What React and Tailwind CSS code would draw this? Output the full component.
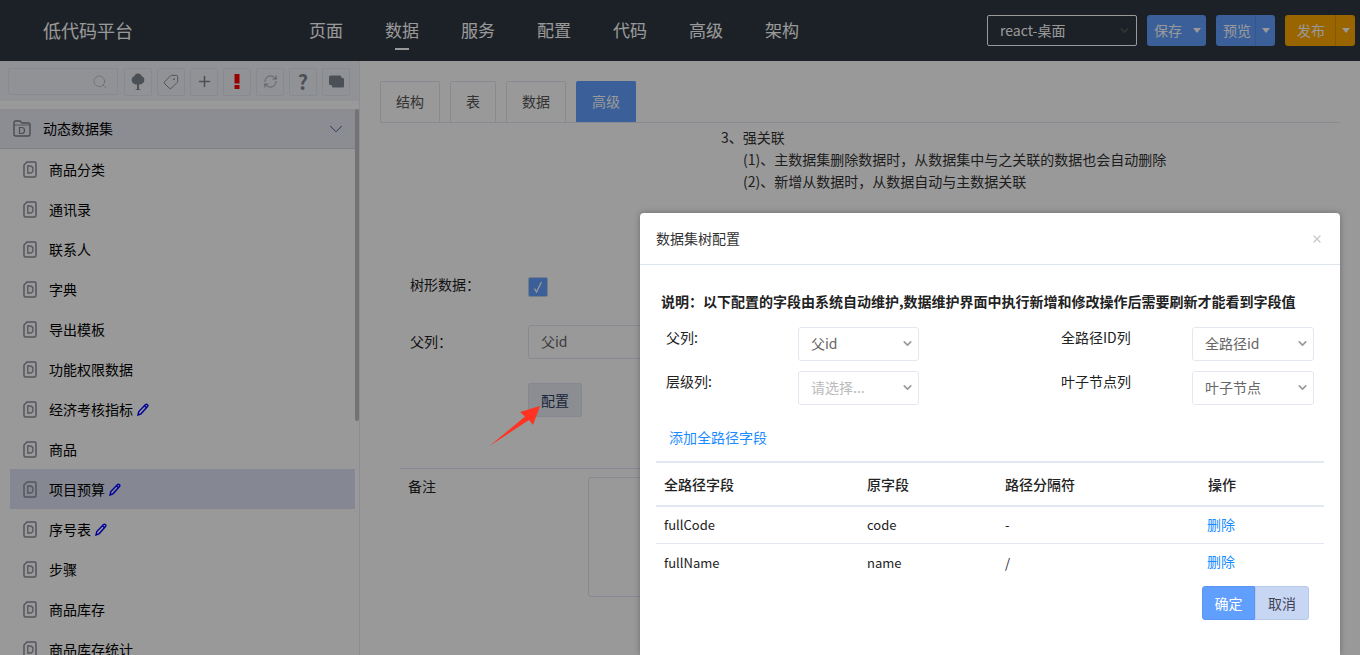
import React from 'react';
import { ChevronDown, Plus, Search, RefreshCw, Tag, X } from 'lucide-react';

const FONT = "font-['Noto_Sans_CJK_SC','Noto_Sans',sans-serif]";

function DocIcon() {
  return (
    <svg width="14" height="17" viewBox="0 0 14 17" fill="none" stroke="#8a8f99" strokeWidth="1.5" className="shrink-0">
      <path d="M4 1 H11.5 Q13 1 13 2.5 V14.5 Q13 16 11.5 16 H2.5 Q1 16 1 14.5 V4 Z" />
      <path d="M4.8 5 V12 H6.8 Q10 12 10 8.5 Q10 5 6.8 5 Z" strokeWidth="1.3" />
    </svg>
  );
}

function FolderIcon() {
  return (
    <svg width="18" height="17" viewBox="0 0 18 17" fill="none" stroke="#7b7f88" strokeWidth="1.4" className="shrink-0">
      <path d="M1 14.5 V2.5 Q1 1 2.5 1 H7 L9 3 H15.5 Q17 3 17 4.5 V14.5 Q17 16 15.5 16 H2.5 Q1 16 1 14.5 Z" />
      <path d="M1 5 H17" strokeWidth="0.8" />
      <path d="M6.5 7.5 V13.5 H8.5 Q11.5 13.5 11.5 10.5 Q11.5 7.5 8.5 7.5 Z" strokeWidth="1.2" />
    </svg>
  );
}

function PencilIcon() {
  return (
    <svg width="12" height="13" viewBox="0 0 12 13" fill="none" stroke="#0000ff" strokeWidth="1.4" className="ml-[4px] shrink-0">
      <path d="M1 12 L1.8 8.5 L8.5 1.5 Q9.5 0.8 10.5 1.7 Q11.3 2.6 10.5 3.5 L4 10.8 Z" />
      <path d="M7.5 2.7 L9.6 4.7" />
    </svg>
  );
}

function ToolBtn({ children }) {
  return (
    <div className="w-[28px] h-[28px] shrink-0 border border-[#e3e7f2] rounded-[2px] flex items-center justify-center">
      {children}
    </div>
  );
}

function TreeIcon() {
  return (
    <svg width="14" height="18" viewBox="0 0 14 18" fill="#7e858f">
      <path d="M7 0.5 C9.5 0.5 10.5 2 10.5 3 C12.5 3.5 13.7 5.5 13.3 7.5 C13 10 11 11.5 8 11.4 L8 16 L10 17 H4 L6 16 L6 11.4 C3 11.5 1 10 0.7 7.5 C0.3 5.5 1.5 3.5 3.5 3 C3.5 2 4.5 0.5 7 0.5 Z" />
    </svg>
  );
}

function CommentsIcon() {
  return (
    <svg width="15" height="13" viewBox="0 0 15 13" fill="#7e858f">
      <path d="M1.5 0.5 H11 Q12.5 0.5 12.5 2 V3 H14 Q15 3 15 4 V11.5 Q15 12.5 14 12.5 H4 Q2.8 12.5 2.8 11 V10 H1.5 Q0 10 0 8.5 V2 Q0 0.5 1.5 0.5 Z" />
    </svg>
  );
}

function BangIcon() {
  return (
    <svg width="6" height="15" viewBox="0 0 6 15" fill="#ff0000">
      <rect x="0.5" y="0" width="5" height="9.5" />
      <rect x="0.5" y="11" width="5" height="4" />
    </svg>
  );
}

const ITEMS = [
  ['商品分类'], ['通讯录'], ['联系人'], ['字典'], ['导出模板'], ['功能权限数据'],
  ['经济考核指标', true], ['商品'], ['项目预算', true, true], ['序号表', true], ['步骤'], ['商品库存'], ['商品库存统计'],
];

function SideItem({ name, edit, active }) {
  return (
    <div className={`h-[40px] shrink-0 flex items-center pl-[13px] ml-[10px] text-[14px] text-black ${active ? 'bg-[#dee3f3]' : ''}`}>
      <DocIcon />
      <span className="ml-[12px]">{name}</span>
      {edit && <PencilIcon />}
    </div>
  );
}

function Sidebar() {
  return (
    <aside className="w-[360px] shrink-0 h-full border-r border-[#e8ebf4] flex flex-col overflow-hidden">
      <div className="h-[40px] shrink-0 bg-[#f2f4fa] flex items-center pl-[8px] pt-[1px] gap-[5px]">
        <div className="w-[110px] h-[27px] mr-[1px] border border-[#e3e7f2] rounded-[2px] flex items-center justify-end pr-[9px]">
          <Search size={16} strokeWidth={1} className="text-[#a8abb2]" />
        </div>
        <ToolBtn><TreeIcon /></ToolBtn>
        <ToolBtn><Tag size={16} strokeWidth={1.4} className="text-[#7e858f] rotate-90" /></ToolBtn>
        <ToolBtn><Plus size={17} strokeWidth={2.2} className="text-[#7e858f]" /></ToolBtn>
        <ToolBtn><BangIcon /></ToolBtn>
        <ToolBtn><RefreshCw size={15} strokeWidth={1.2} className="text-[#7e858f]" /></ToolBtn>
        <ToolBtn><span className="text-[#7e858f] text-[20px] font-bold leading-none">?</span></ToolBtn>
        <ToolBtn><CommentsIcon /></ToolBtn>
      </div>
      <div className="flex-1 relative mt-[8px] min-h-0">
        <div className="h-[40px] bg-[#e9ecf6] border-b border-[#d5d8df] flex items-center pl-[13px] pr-[12px] text-[14px] text-black">
          <FolderIcon />
          <span className="ml-[12px] flex-1">动态数据集</span>
          <ChevronDown size={22} strokeWidth={1} className="text-[#2f4f88]" />
        </div>
        <div className="flex flex-col pr-[4px]">
          {ITEMS.map(([n, e, a]) => <SideItem key={n} name={n} edit={e} active={a} />)}
        </div>
        <div className="absolute right-0 top-0 w-[4px] h-[312px] bg-[#c0c0c0] rounded-[2px]" />
      </div>
    </aside>
  );
}

function PageTab({ w, children, active }) {
  return (
    <div className={`${w} h-[41px] flex items-center justify-center pb-[2px] text-[14px] border border-b-0 rounded-t-[2px] ${active ? 'bg-[#619fff] border-[#619fff] text-white' : 'border-[#e3e7f2] text-[#555]'}`}>
      {children}
    </div>
  );
}

function Main() {
  return (
    <main className="flex-1 min-w-0 h-full pt-[20px] pl-[20px] pr-[20px] text-[14px] text-[#333]">
      <div className="flex gap-[10px] border-b border-[#e3e7f2] h-[42px]">
        <PageTab w="w-[60px]">结构</PageTab>
        <PageTab w="w-[46px]">表</PageTab>
        <PageTab w="w-[60px]">数据</PageTab>
        <PageTab w="w-[60px]" active>高级</PageTab>
      </div>
      <div className="ml-[341px] mt-[3px] text-[#333] leading-[22px]">
        <div>3、强关联</div>
        <div className="ml-[22px]">(1)、主数据集删除数据时，从数据集中与之关联的数据也会自动删除</div>
        <div className="ml-[22px]">(2)、新增从数据时，从数据自动与主数据关联</div>
      </div>
      <div className="flex items-center mt-[85px] h-[20px]">
        <span className="w-[148px] pl-[30px] pb-[6px] text-[#222]">树形数据：</span>
        <span className="w-[20px] h-[20px] bg-[#619fff] border border-[#c5d0e6] rounded-[2px] flex items-center justify-center">
          <svg width="10" height="12" viewBox="0 0 10 12" fill="none" stroke="#fff" strokeWidth="1.3"><path d="M1.5 7.5 L3.5 11 L8.5 1" /></svg>
        </span>
      </div>
      <div className="flex items-center mt-[28px]">
        <span className="w-[148px] pl-[30px] pb-[2px] text-[#222]">父列：</span>
        <div className="w-[300px] h-[34px] border border-[#e3e7f2] rounded-[3px] flex items-center pl-[12px] pb-[1px] text-[#666]">父id</div>
      </div>
      <div className="ml-[148px] mt-[24px] w-[54px] h-[34px] bg-[#e8ebf4] border border-[#dfe3ef] rounded-[2px] flex items-center justify-center text-[#2c3e5c]">配置</div>
      <div className="ml-[20px] mt-[51px] border-t border-[#e3e7f2] flex pt-[8px]">
        <span className="ml-[8px] w-[180px] -mt-[1px] h-[21px] text-[#222]">备注</span>
        <div className="w-[300px] h-[120px] border border-[#e3e7f2] rounded-[3px]" />
      </div>
    </main>
  );
}

function HeaderSplit({ w, pad, bg, divider, text }) {
  return (
    <div className={`${w} h-[31px] ${bg} rounded-[3px] flex items-center text-[14px] text-white`}>
      <span className={`flex-1 ${pad}`}>{text}</span>
      <span className={`w-[20px] h-full flex items-center justify-center border-l ${divider}`}>
        <span className="w-0 h-0 border-x-[4px] border-x-transparent border-t-[5px] border-t-white" />
      </span>
    </div>
  );
}

function Header() {
  const nav = ['页面', '数据', '服务', '配置', '代码', '高级', '架构'];
  return (
    <header className="h-[61px] shrink-0 bg-[#2f3741] flex items-center text-white">
      <div className="w-[309px] pl-[43px] text-[18px] pb-[1px]">低代码平台</div>
      <nav className="flex gap-[42px] text-[17px] pb-[1px]">
        {nav.map((n, i) => (
          <span key={n} className="relative w-[34px] text-center whitespace-nowrap">
            {n}
            {i === 1 && <span className="absolute left-[10px] right-[10px] -bottom-[7px] h-[2px] bg-white" />}
          </span>
        ))}
      </nav>
      <div className="ml-auto flex items-center gap-[10px] pr-[5px]">
        <div className="w-[150px] h-[31px] border border-white rounded-[2px] flex items-center justify-between pl-[12px] pr-[5px] text-[14px]">
          <span>react-桌面</span>
          <ChevronDown size={13} strokeWidth={3} className="text-[#555]" />
        </div>
        <HeaderSplit w="w-[59px]" pad="pl-[7px]" bg="bg-[#619fff]" divider="border-[#619fff]" text="保存" />
        <HeaderSplit w="w-[59px]" pad="pl-[7px]" bg="bg-[#619fff]" divider="border-[#5790e8]" text="预览" />
        <HeaderSplit w="w-[70px]" pad="pl-[12px]" bg="bg-[#ffa800]" divider="border-[#e09400]" text="发布" />
      </div>
    </header>
  );
}

function Sel({ children, placeholder }) {
  return (
    <div className={`h-[34px] border border-[#e3e7f2] rounded-[3px] flex items-center justify-between pl-[12px] pr-[4px] pb-[1px] text-[14px] ${placeholder ? 'text-[#bbb]' : 'text-[#666]'}`}>
      <span>{children}</span>
      <ChevronDown size={13} strokeWidth={3} className="text-[#999]" />
    </div>
  );
}

function Modal() {
  const rows = [['fullCode', 'code', '-'], ['fullName', 'name', '/']];
  return (
    <div className="absolute left-[640px] top-[213px] w-[700px] h-[442px] bg-white rounded-t-[4px] shadow-[0_0_6px_rgba(0,0,0,0.3)] text-[14px] text-[#222]">
      <div className="h-[52px] border-b border-[#dfe5ec] flex items-center justify-between pl-[16px] pr-[17px]">
        <span className="text-[#333]">数据集树配置</span>
        <X size={12} strokeWidth={2.4} className="text-[#c8c8c8]" />
      </div>
      <div className="pl-[21px] pt-[26px] font-bold leading-[20px] text-[#222] whitespace-nowrap">说明：以下配置的字段由系统自动维护,数据维护界面中执行新增和修改操作后需要刷新才能看到字段值</div>
      <div className="grid grid-cols-[132px_121px_142px_131px_122px] grid-rows-[34px_34px] gap-y-[10px] pl-[26px] pt-[16px]">
        <span className="leading-[20px]">父列:</span>
        <Sel>父id</Sel>
        <span />
        <span className="leading-[20px]">全路径ID列</span>
        <Sel>全路径id</Sel>
        <span className="leading-[20px]">层级列:</span>
        <Sel placeholder>请选择...</Sel>
        <span />
        <span className="leading-[20px]">叶子节点列</span>
        <Sel>叶子节点</Sel>
      </div>
      <div className="pl-[29px] pt-[21px] leading-[22px] text-[#1a8cff]">添加全路径字段</div>
      <div className="mx-[16px] mt-[13px] border-t-2 border-[#e3e7f2]">
        <div className="grid grid-cols-[203px_138px_203px_124px] h-[44px] items-center border-b-2 border-[#e3e7f2] font-medium pl-[8px]">
          <span>全路径字段</span><span>原字段</span><span>路径分隔符</span><span>操作</span>
        </div>
        {rows.map((r) => (
          <div key={r[0]} className="grid grid-cols-[203px_138px_203px_124px] h-[37px] items-center border-b last:border-b-0 border-[#e3e7f2] pl-[8px] text-[13px]">
            <span>{r[0]}</span><span>{r[1]}</span><span>{r[2]}</span>
            <span className="text-[14px] text-[#1a8cff] pb-[2px] -ml-[1px]">删除</span>
          </div>
        ))}
      </div>
      <div className="flex justify-end pr-[31px] mt-[5px]">
        <div className="w-[53px] h-[34px] bg-[#619fff] border border-[#5a95f2] rounded-l-[3px] flex items-center justify-center text-white">确定</div>
        <div className="w-[54px] h-[34px] bg-[#c6d6f3] border border-[#b9c9e8] rounded-r-[3px] flex items-center justify-center text-[#445]">取消</div>
      </div>
    </div>
  );
}

export default function App() {
  return (
    <div className={`relative w-[1360px] h-[655px] overflow-hidden bg-white ${FONT}`}>
      <div className="flex flex-col h-full">
        <Header />
        <div className="flex flex-1 min-h-0">
          <Sidebar />
          <Main />
        </div>
      </div>
      <div className="absolute inset-0 bg-black/40" />
      <svg className="absolute left-[488px] top-[404px]" width="54" height="44" viewBox="0 0 54 44">
        <path d="M1.5 42 L37 12.5 L32 8 L52 2 L45 21 L41 16 Z" fill="#ff3322" />
      </svg>
      <Modal />
    </div>
  );
}
